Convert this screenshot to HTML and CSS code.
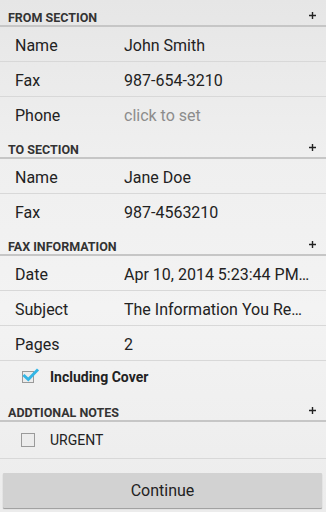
FILE: index.html
```
<!DOCTYPE html>
<html>
<head>
<meta charset="utf-8">
<link rel="stylesheet" href="styles.css">
</head>
<body>
<div class="screen">
  <div class="section-header"><span>FROM SECTION</span><svg class="plus" width="7" height="7" viewBox="0 0 7 7"><path d="M3.5 0V7M0 3.5H7" stroke="#222" stroke-width="1.4"/></svg></div>
  <div class="row"><span class="label">Name</span><span class="value">John Smith</span></div>
  <div class="row"><span class="label">Fax</span><span class="value">987-654-3210</span></div>
  <div class="row last"><span class="label">Phone</span><span class="value hint">click to set</span></div>

  <div class="section-header"><span>TO SECTION</span><svg class="plus" width="7" height="7" viewBox="0 0 7 7"><path d="M3.5 0V7M0 3.5H7" stroke="#222" stroke-width="1.4"/></svg></div>
  <div class="row"><span class="label">Name</span><span class="value">Jane Doe</span></div>
  <div class="row last"><span class="label">Fax</span><span class="value">987-4563210</span></div>

  <div class="section-header"><span>FAX INFORMATION</span><svg class="plus" width="7" height="7" viewBox="0 0 7 7"><path d="M3.5 0V7M0 3.5H7" stroke="#222" stroke-width="1.4"/></svg></div>
  <div class="row"><span class="label">Date</span><span class="value">Apr 10, 2014 5:23:44 PM…</span></div>
  <div class="row"><span class="label">Subject</span><span class="value">The Information You Re…</span></div>
  <div class="row"><span class="label">Pages</span><span class="value">2</span></div>
  <div class="check-row last">
    <span class="box checked"><svg width="17" height="17" viewBox="0 0 17 17"><path d="M2.5 9L6.3 12.5L15 3.5" fill="none" stroke="#33b5e5" stroke-width="3" stroke-linecap="square"/></svg></span>
    <span class="check-label bold">Including Cover</span>
  </div>

  <div class="section-header"><span>ADDTIONAL NOTES</span><svg class="plus" width="7" height="7" viewBox="0 0 7 7"><path d="M3.5 0V7M0 3.5H7" stroke="#222" stroke-width="1.4"/></svg></div>
  <div class="check-row urgent">
    <span class="box"></span>
    <span class="check-label">URGENT</span>
  </div>

  <div class="actions"><button class="btn">Continue</button></div>
</div>
</body>
</html>
```
FILE: styles.css
```
html, body {
  margin: 0;
  padding: 0;
}
body {
  width: 326px;
  height: 512px;
  overflow: hidden;
  font-family: Roboto, "Liberation Sans", sans-serif;
  color: #222;
  background: linear-gradient(to bottom, #e6e6e6 0%, #efefef 30%, #f3f3f3 60%, #ececec 100%);
}
.screen {
  display: flex;
  flex-direction: column;
}
.section-header {
  box-sizing: border-box;
  height: 27px;
  padding: 9px 8px 0 8px;
  display: flex;
  align-items: center;
  justify-content: space-between;
  border-bottom: 2px solid #c6c6c6;
  font-size: 12.5px;
  font-weight: bold;
  color: #333;
}
.plus {
  margin-right: 2px;
  margin-top: -4px;
}
.row {
  box-sizing: border-box;
  height: 35px;
  padding-top: 2px;
  display: flex;
  align-items: center;
  border-bottom: 1px solid #d8d8d8;
  font-size: 16px;
}
.row.last, .check-row.last {
  border-bottom: none;
}
.label {
  width: 124px;
  padding-left: 15px;
  box-sizing: border-box;
  flex: none;
}
.value {
  white-space: nowrap;
  overflow: hidden;
}
.hint {
  color: #8c8c8c;
}
.check-row {
  box-sizing: border-box;
  height: 34px;
  padding-bottom: 2px;
  display: flex;
  align-items: center;
  font-size: 14px;
  border-bottom: 1px solid #d8d8d8;
}
.check-row.urgent {
  height: 37px;
  padding-bottom: 0;
}
.box {
  position: relative;
  box-sizing: border-box;
  width: 14px;
  height: 14px;
  margin-left: 21px;
  margin-right: 15px;
  border: 1px solid #9a9a9a;
  background: #ececec;
  flex: none;
}
.box.checked {
  width: 12px;
  height: 12px;
  margin-left: 22px;
  margin-right: 16px;
}
.box svg {
  position: absolute;
  left: -1px;
  top: -5px;
}
.check-label.bold {
  font-weight: bold;
}
.actions {
  padding: 14px 4px 0 3px;
}
.btn {
  display: block;
  width: 100%;
  height: 35px;
  border: none;
  border-radius: 1px;
  background: #d2d2d2;
  box-shadow: 0 1px 1px rgba(0,0,0,0.35);
  font-family: Roboto, "Liberation Sans", sans-serif;
  font-size: 16px;
  color: #222;
  padding: 0;
}
```
